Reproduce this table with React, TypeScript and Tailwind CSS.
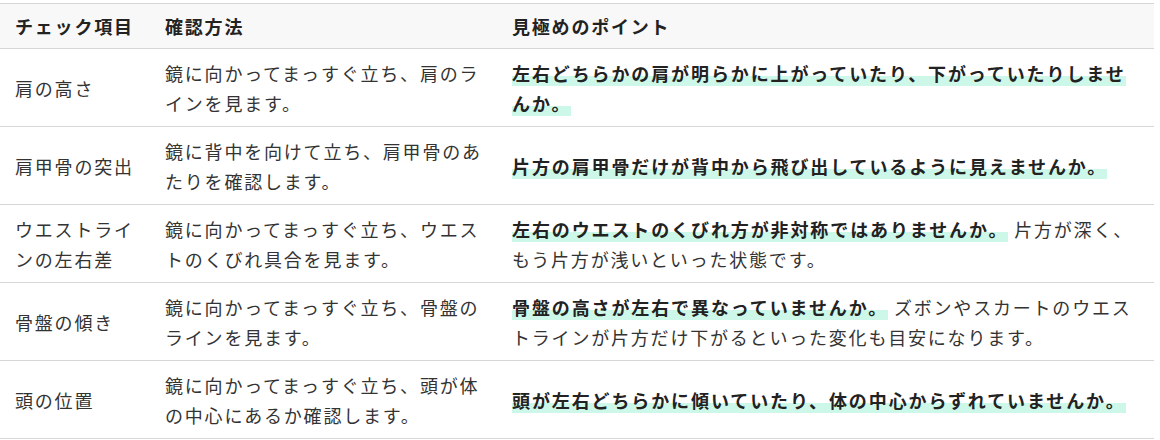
import React from "react";

type Row = {
  item: string;
  method: string;
  point: string;
  note?: string;
};

const ROWS: Row[] = [
  {
    item: "肩の高さ",
    method: "鏡に向かってまっすぐ立ち、肩のラインを見ます。",
    point: "左右どちらかの肩が明らかに上がっていたり、下がっていたりしませんか。",
  },
  {
    item: "肩甲骨の突出",
    method: "鏡に背中を向けて立ち、肩甲骨のあたりを確認します。",
    point: "片方の肩甲骨だけが背中から飛び出しているように見えませんか。",
  },
  {
    item: "ウエストラインの左右差",
    method: "鏡に向かってまっすぐ立ち、ウエストのくびれ具合を見ます。",
    point: "左右のウエストのくびれ方が非対称ではありませんか。",
    note: "片方が深く、もう片方が浅いといった状態です。",
  },
  {
    item: "骨盤の傾き",
    method: "鏡に向かってまっすぐ立ち、骨盤のラインを見ます。",
    point: "骨盤の高さが左右で異なっていませんか。",
    note: "ズボンやスカートのウエストラインが片方だけ下がるといった変化も目安になります。",
  },
  {
    item: "頭の位置",
    method: "鏡に向かってまっすぐ立ち、頭が体の中心にあるか確認します。",
    point: "頭が左右どちらかに傾いていたり、体の中心からずれていませんか。",
  },
];

export default function App() {
  return (
    <div
      className="bg-white pt-[3px] text-[18px] leading-[30px] tracking-[0.1em] text-[#333]"
      style={{ fontFamily: '"Noto Sans CJK JP", "Noto Sans", sans-serif' }}
    >
      <table className="w-[1154px] table-fixed border-collapse">
        <colgroup>
          <col className="w-[150px]" />
          <col className="w-[347px]" />
          <col />
        </colgroup>
        <thead>
          <tr className="h-[45px] border-y border-[#d6d6d6] bg-[#f8f8f8]">
            <th className="px-[15px] text-left align-middle font-bold text-[#222]">チェック項目</th>
            <th className="pl-[15px] pr-[14px] text-left align-middle font-bold text-[#222]">確認方法</th>
            <th className="px-[15px] text-left align-middle font-bold text-[#222]">見極めのポイント</th>
          </tr>
        </thead>
        <tbody>
          {ROWS.map((row) => (
            <tr key={row.item} className="h-[78px] border-b border-[#d6d6d6]">
              <td className="px-[15px] align-middle">{row.item}</td>
              <td className="pl-[15px] pr-[14px] align-middle">{row.method}</td>
              <td className="px-[15px] align-middle">
                {/* marker-style highlight on the key question */}
                <span className="bg-[linear-gradient(transparent_60%,#cdf8e9_60%)] font-bold tracking-[0.105em] text-[#222]">
                  {row.point}
                </span>
                {row.note && <> {row.note}</>}
              </td>
            </tr>
          ))}
        </tbody>
      </table>
    </div>
  );
}
